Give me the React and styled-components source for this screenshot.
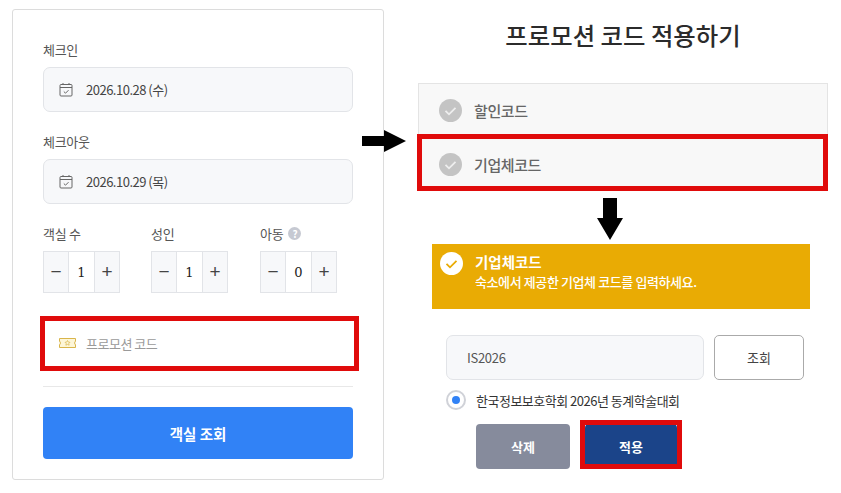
import React from "react";
import styled, { createGlobalStyle } from "styled-components";

const GlobalStyle = createGlobalStyle`
  html, body {
    margin: 0;
    padding: 0;
    background: #fff;
  }
  body {
    font-family: "Noto Sans CJK KR", "Noto Sans", sans-serif;
    color: #444;
  }
  * {
    box-sizing: border-box;
  }
`;

const Page = styled.div`
  position: relative;
  width: 841px;
  height: 493px;
  padding: 9px 13px 0 12px;
  display: flex;
  justify-content: space-between;
  align-items: flex-start;
  overflow: hidden;
`;

const Card = styled.div`
  width: 372px;
  height: 471px;
  padding: 30px 30px 20px;
  border: 1px solid #dcdcdc;
  border-radius: 3px;
  display: flex;
  flex-direction: column;
`;

const Label = styled.div`
  height: 19px;
  font-size: 13px;
  line-height: 19px;
  letter-spacing: -0.3px;
  color: #555;
  display: flex;
  align-items: center;
  gap: 5px;
`;

const DateField = styled.div`
  height: 45px;
  margin: 8px 0 20px;
  padding: 0 15px;
  background: #f7f8fa;
  border: 1px solid #e2e4e8;
  border-radius: 7px;
  display: flex;
  align-items: center;
  gap: 13px;
  font-size: 13px;
  letter-spacing: -0.5px;
  color: #444;
`;

const Counters = styled.div`
  display: flex;
`;

const CounterGroup = styled.div`
  width: ${(p) => p.$width}px;
`;

const Stepper = styled.div`
  width: 77px;
  height: 42px;
  margin-top: 8px;
  display: grid;
  grid-template-columns: 24px 1fr 24px;
  border: 1px solid #e2e4e8;
`;

const StepButton = styled.div`
  background: #f7f8fa;
  display: flex;
  align-items: center;
  justify-content: center;
  font-family: "Liberation Sans", sans-serif;
  font-size: 19px;
  color: #444;
`;

const StepValue = styled.div`
  border-left: 1px solid #e2e4e8;
  border-right: 1px solid #e2e4e8;
  display: flex;
  align-items: center;
  justify-content: center;
  font-family: "DejaVu Serif", "Liberation Serif", serif;
  font-size: 13px;
  color: #222;
`;

const HelpDot = styled.span`
  width: 13px;
  height: 13px;
  border-radius: 50%;
  background: #c6c9d2;
  color: #fff;
  font-size: 10px;
  font-weight: 700;
  line-height: 13px;
  text-align: center;
`;

const PromoRow = styled.div`
  height: 54px;
  margin-top: 23px;
  padding: 0 16px;
  display: flex;
  align-items: center;
  gap: 10px;
  font-size: 13px;
  letter-spacing: -0.5px;
  color: #9a9a9a;
`;

const Divider = styled.div`
  height: 1px;
  margin-top: 16px;
  background: #e8e8e8;
`;

const SearchButton = styled.div`
  height: 52px;
  margin-top: 20px;
  background: #3182f6;
  border-radius: 4px;
  color: #fff;
  font-size: 14.5px;
  font-weight: 700;
  display: flex;
  align-items: center;
  justify-content: center;
`;

const Side = styled.div`
  width: 410px;
  margin-top: -9px;
  display: flex;
  flex-direction: column;
`;

const Title = styled.h1`
  margin: 16px 0 0;
  height: 37px;
  font-size: 24.4px;
  line-height: 37px;
  font-weight: 500;
  color: #2b2b2b;
  text-align: center;
`;

const Accordion = styled.div`
  margin-top: 30px;
  height: 107px;
  background: #f8f8f8;
  border: 1px solid #e4e4e4;
`;

const AccordionRow = styled.div`
  height: ${(p) => p.$height}px;
  padding-left: 20px;
  display: flex;
  align-items: center;
  gap: 12px;
  font-size: 15px;
  font-weight: 500;
  letter-spacing: -0.4px;
  color: #666;
`;

const Banner = styled.div`
  margin: 54px 18px 0 14px;
  height: 65px;
  padding: 8px 8px;
  background: #e9ab04;
  color: #fff;
  display: flex;
  gap: 12px;
`;

const BannerTitle = styled.div`
  font-size: 14.5px;
  font-weight: 700;
  line-height: 20px;
`;

const BannerText = styled.div`
  font-size: 13px;
  font-weight: 500;
  line-height: 20px;
  letter-spacing: -0.4px;
`;

const CodeRow = styled.div`
  margin: 26px 24px 0 28px;
  display: flex;
  gap: 10px;
`;

const CodeInput = styled.div`
  flex: 1;
  height: 45px;
  padding: 0 20px;
  background: #f7f8fa;
  border: 1px solid #e2e4e8;
  border-radius: 7px;
  display: flex;
  align-items: center;
  font-size: 13px;
  letter-spacing: -0.3px;
  color: #555;
`;

const LookupButton = styled.div`
  width: 90px;
  height: 45px;
  border: 1px solid #aaa;
  border-radius: 5px;
  display: flex;
  align-items: center;
  justify-content: center;
  font-size: 13px;
  color: #444;
`;

const RadioRow = styled.div`
  margin: 9px 0 0 28px;
  height: 22px;
  display: flex;
  align-items: center;
  gap: 10px;
  font-size: 13px;
  letter-spacing: -0.5px;
  color: #333;
`;

const Radio = styled.span`
  width: 20px;
  height: 20px;
  border-radius: 50%;
  border: 2px solid #d0d2d8;
  display: flex;
  align-items: center;
  justify-content: center;

  &::after {
    content: "";
    width: 8px;
    height: 8px;
    border-radius: 50%;
    background: #3182f6;
  }
`;

const ActionRow = styled.div`
  margin: 13px 0 0 58px;
  display: flex;
  gap: 15px;
`;

const ActionButton = styled.div`
  width: ${(p) => p.$width}px;
  height: 45px;
  background: ${(p) => p.$bg};
  border-radius: 4px;
  color: #fff;
  font-size: 13px;
  font-weight: 700;
  display: flex;
  align-items: center;
  justify-content: center;
`;

const RedBox = styled.div`
  position: absolute;
  left: ${(p) => p.$x}px;
  top: ${(p) => p.$y}px;
  width: ${(p) => p.$w}px;
  height: ${(p) => p.$h}px;
  border: 5px solid #e00b0b;
`;

const ArrowMark = styled.svg`
  position: absolute;
  left: ${(p) => p.$x}px;
  top: ${(p) => p.$y}px;
`;

const CalendarIcon = () => (
  <svg width="14" height="15" viewBox="0 0 14 15" fill="none" stroke="#666" strokeWidth="1">
    <rect x="1" y="2.5" width="12" height="11.5" rx="1" />
    <path d="M1 5.5h12M4 1v2M10 1v2M4.8 9.5l1.7 1.7 3-3" />
  </svg>
);

const TicketIcon = () => (
  <svg width="17" height="10" viewBox="0 0 17 10" fill="#fdf6d8" stroke="#d9b54a" strokeWidth="1">
    <path d="M0.5 0.5h16v2.5l-1 2 1 2v2.5H0.5V7l1-2-1-2z" />
    <path d="M8.5 2.5l.8 1.6 1.7.2-1.2 1.2.3 1.7-1.6-.8-1.6.8.3-1.7L6 4.3l1.7-.2z" strokeWidth="0.7" />
  </svg>
);

const CheckCircle = ({ bg, color }) => (
  <svg width="23" height="23" viewBox="0 0 23 23">
    <circle cx="11.5" cy="11.5" r="11.5" fill={bg} />
    <path d="M6.5 11.8l3.5 3.5 6.5-6.5" fill="none" stroke={color} strokeWidth="1.8" />
  </svg>
);

const Counter = ({ label, value, width, help }) => (
  <CounterGroup $width={width}>
    <Label>
      {label}
      {help && <HelpDot>?</HelpDot>}
    </Label>
    <Stepper>
      <StepButton>−</StepButton>
      <StepValue>{value}</StepValue>
      <StepButton>+</StepButton>
    </Stepper>
  </CounterGroup>
);

export default function App() {
  return (
    <Page>
      <GlobalStyle />
      <Card>
        <Label>체크인</Label>
        <DateField>
          <CalendarIcon />
          2026.10.28 (수)
        </DateField>
        <Label>체크아웃</Label>
        <DateField>
          <CalendarIcon />
          2026.10.29 (목)
        </DateField>
        <Counters>
          <Counter label="객실 수" value="1" width={108} />
          <Counter label="성인" value="1" width={109} />
          <Counter label="아동" value="0" width={77} help />
        </Counters>
        <PromoRow>
          <TicketIcon />
          프로모션 코드
        </PromoRow>
        <Divider />
        <SearchButton>객실 조회</SearchButton>
      </Card>
      <Side>
        <Title>프로모션 코드 적용하기</Title>
        <Accordion>
          <AccordionRow $height={52}>
            <CheckCircle bg="#c4c4c4" color="#eee" />
            할인코드
          </AccordionRow>
          <AccordionRow $height={56}>
            <CheckCircle bg="#c4c4c4" color="#eee" />
            기업체코드
          </AccordionRow>
        </Accordion>
        <Banner>
          <CheckCircle bg="#fff" color="#e9ab04" />
          <div>
            <BannerTitle>기업체코드</BannerTitle>
            <BannerText>숙소에서 제공한 기업체 코드를 입력하세요.</BannerText>
          </div>
        </Banner>
        <CodeRow>
          <CodeInput>IS2026</CodeInput>
          <LookupButton>조회</LookupButton>
        </CodeRow>
        <RadioRow>
          <Radio />
          한국정보보호학회 2026년 동계학술대회
        </RadioRow>
        <ActionRow>
          <ActionButton $width={94} $bg="#868b9c">삭제</ActionButton>
          <ActionButton $width={92} $bg="#1b4489">적용</ActionButton>
        </ActionRow>
      </Side>
      <RedBox $x={40} $y={316} $w={319} $h={55} />
      <RedBox $x={417} $y={134} $w={411} $h={57} />
      <RedBox $x={580} $y={420} $w={102} $h={49} />
      <ArrowMark $x={362} $y={130} width="44" height="22" viewBox="0 0 44 22">
        <path d="M0 6h22V0l22 11-22 11v-6H0z" fill="#000" />
      </ArrowMark>
      <ArrowMark $x={597} $y={198} width="26" height="42" viewBox="0 0 26 42">
        <path d="M6 0h14v20h6L13 42 0 20h6z" fill="#000" />
      </ArrowMark>
    </Page>
  );
}
